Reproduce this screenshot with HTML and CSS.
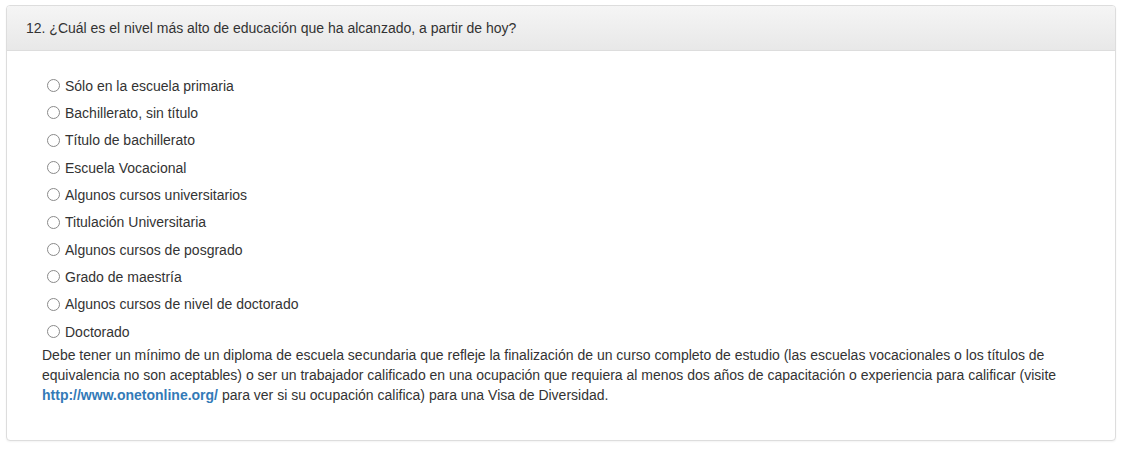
FILE: index.html
```html
<!DOCTYPE html>
<html>
<head>
    <title>Pregunta 12</title>
    <link rel="stylesheet" href="styles.css">
</head>
<body>
    <div class="page">
        <div class="panel">
            <div class="panel-heading">12. ¿Cuál es el nivel más alto de educación que ha alcanzado, a partir de hoy?</div>
            <div class="panel-body">
                <div class="options">
                    <label class="option"><input type="radio" name="q12" value="1"> Sólo en la escuela primaria</label>
                    <label class="option"><input type="radio" name="q12" value="2"> Bachillerato, sin título</label>
                    <label class="option"><input type="radio" name="q12" value="3"> Título de bachillerato</label>
                    <label class="option"><input type="radio" name="q12" value="4"> Escuela Vocacional</label>
                    <label class="option"><input type="radio" name="q12" value="5"> Algunos cursos universitarios</label>
                    <label class="option"><input type="radio" name="q12" value="6"> Titulación Universitaria</label>
                    <label class="option"><input type="radio" name="q12" value="7"> Algunos cursos de posgrado</label>
                    <label class="option"><input type="radio" name="q12" value="8"> Grado de maestría</label>
                    <label class="option"><input type="radio" name="q12" value="9"> Algunos cursos de nivel de doctorado</label>
                    <label class="option"><input type="radio" name="q12" value="10"> Doctorado</label>
                </div>
                <p class="note">Debe tener un mínimo de un diploma de escuela secundaria que refleje la finalización de un curso completo de estudio (las escuelas vocacionales o los títulos de equivalencia no son aceptables) o ser un trabajador calificado en una ocupación que requiera al menos dos años de capacitación o experiencia para calificar (visite <a href="#">http://www.onetonline.org/</a> para ver si su ocupación califica) para una Visa de Diversidad.</p>
            </div>
        </div>
    </div>
</body>
</html>
```

FILE: styles.css
```css
body {
    margin: 0;
    font-family: "Liberation Sans", Arial, sans-serif;
    font-size: 14px;
    line-height: 20px;
    color: #333;
    background-color: #fff;
}

.page {
    padding: 5px 6px;
}

.panel {
    border: 1px solid #ddd;
    border-radius: 4px;
    background-color: #fff;
    box-shadow: 0 1px 2px rgba(0, 0, 0, 0.05);
}

.panel-heading {
    padding: 12px 19px;
    background-image: linear-gradient(to bottom, #f5f5f5 0, #e8e8e8 100%);
    border-bottom: 1px solid #ddd;
    border-radius: 3px 3px 0 0;
}

.panel-body {
    padding: 21px 35px 35px 35px;
}

.options {
    display: grid;
    grid-auto-rows: 27.33px;
    padding-left: 5px;
}

.option {
    display: flex;
    align-items: center;
    gap: 5px;
}

.option input[type="radio"] {
    appearance: none;
    -webkit-appearance: none;
    width: 13px;
    height: 13px;
    margin: 0;
    border: 1px solid #8a8a8a;
    border-radius: 50%;
    background-color: #fff;
}

.note {
    margin: 0;
}

.note a {
    color: #337ab7;
    font-weight: bold;
    text-decoration: none;
}
```
